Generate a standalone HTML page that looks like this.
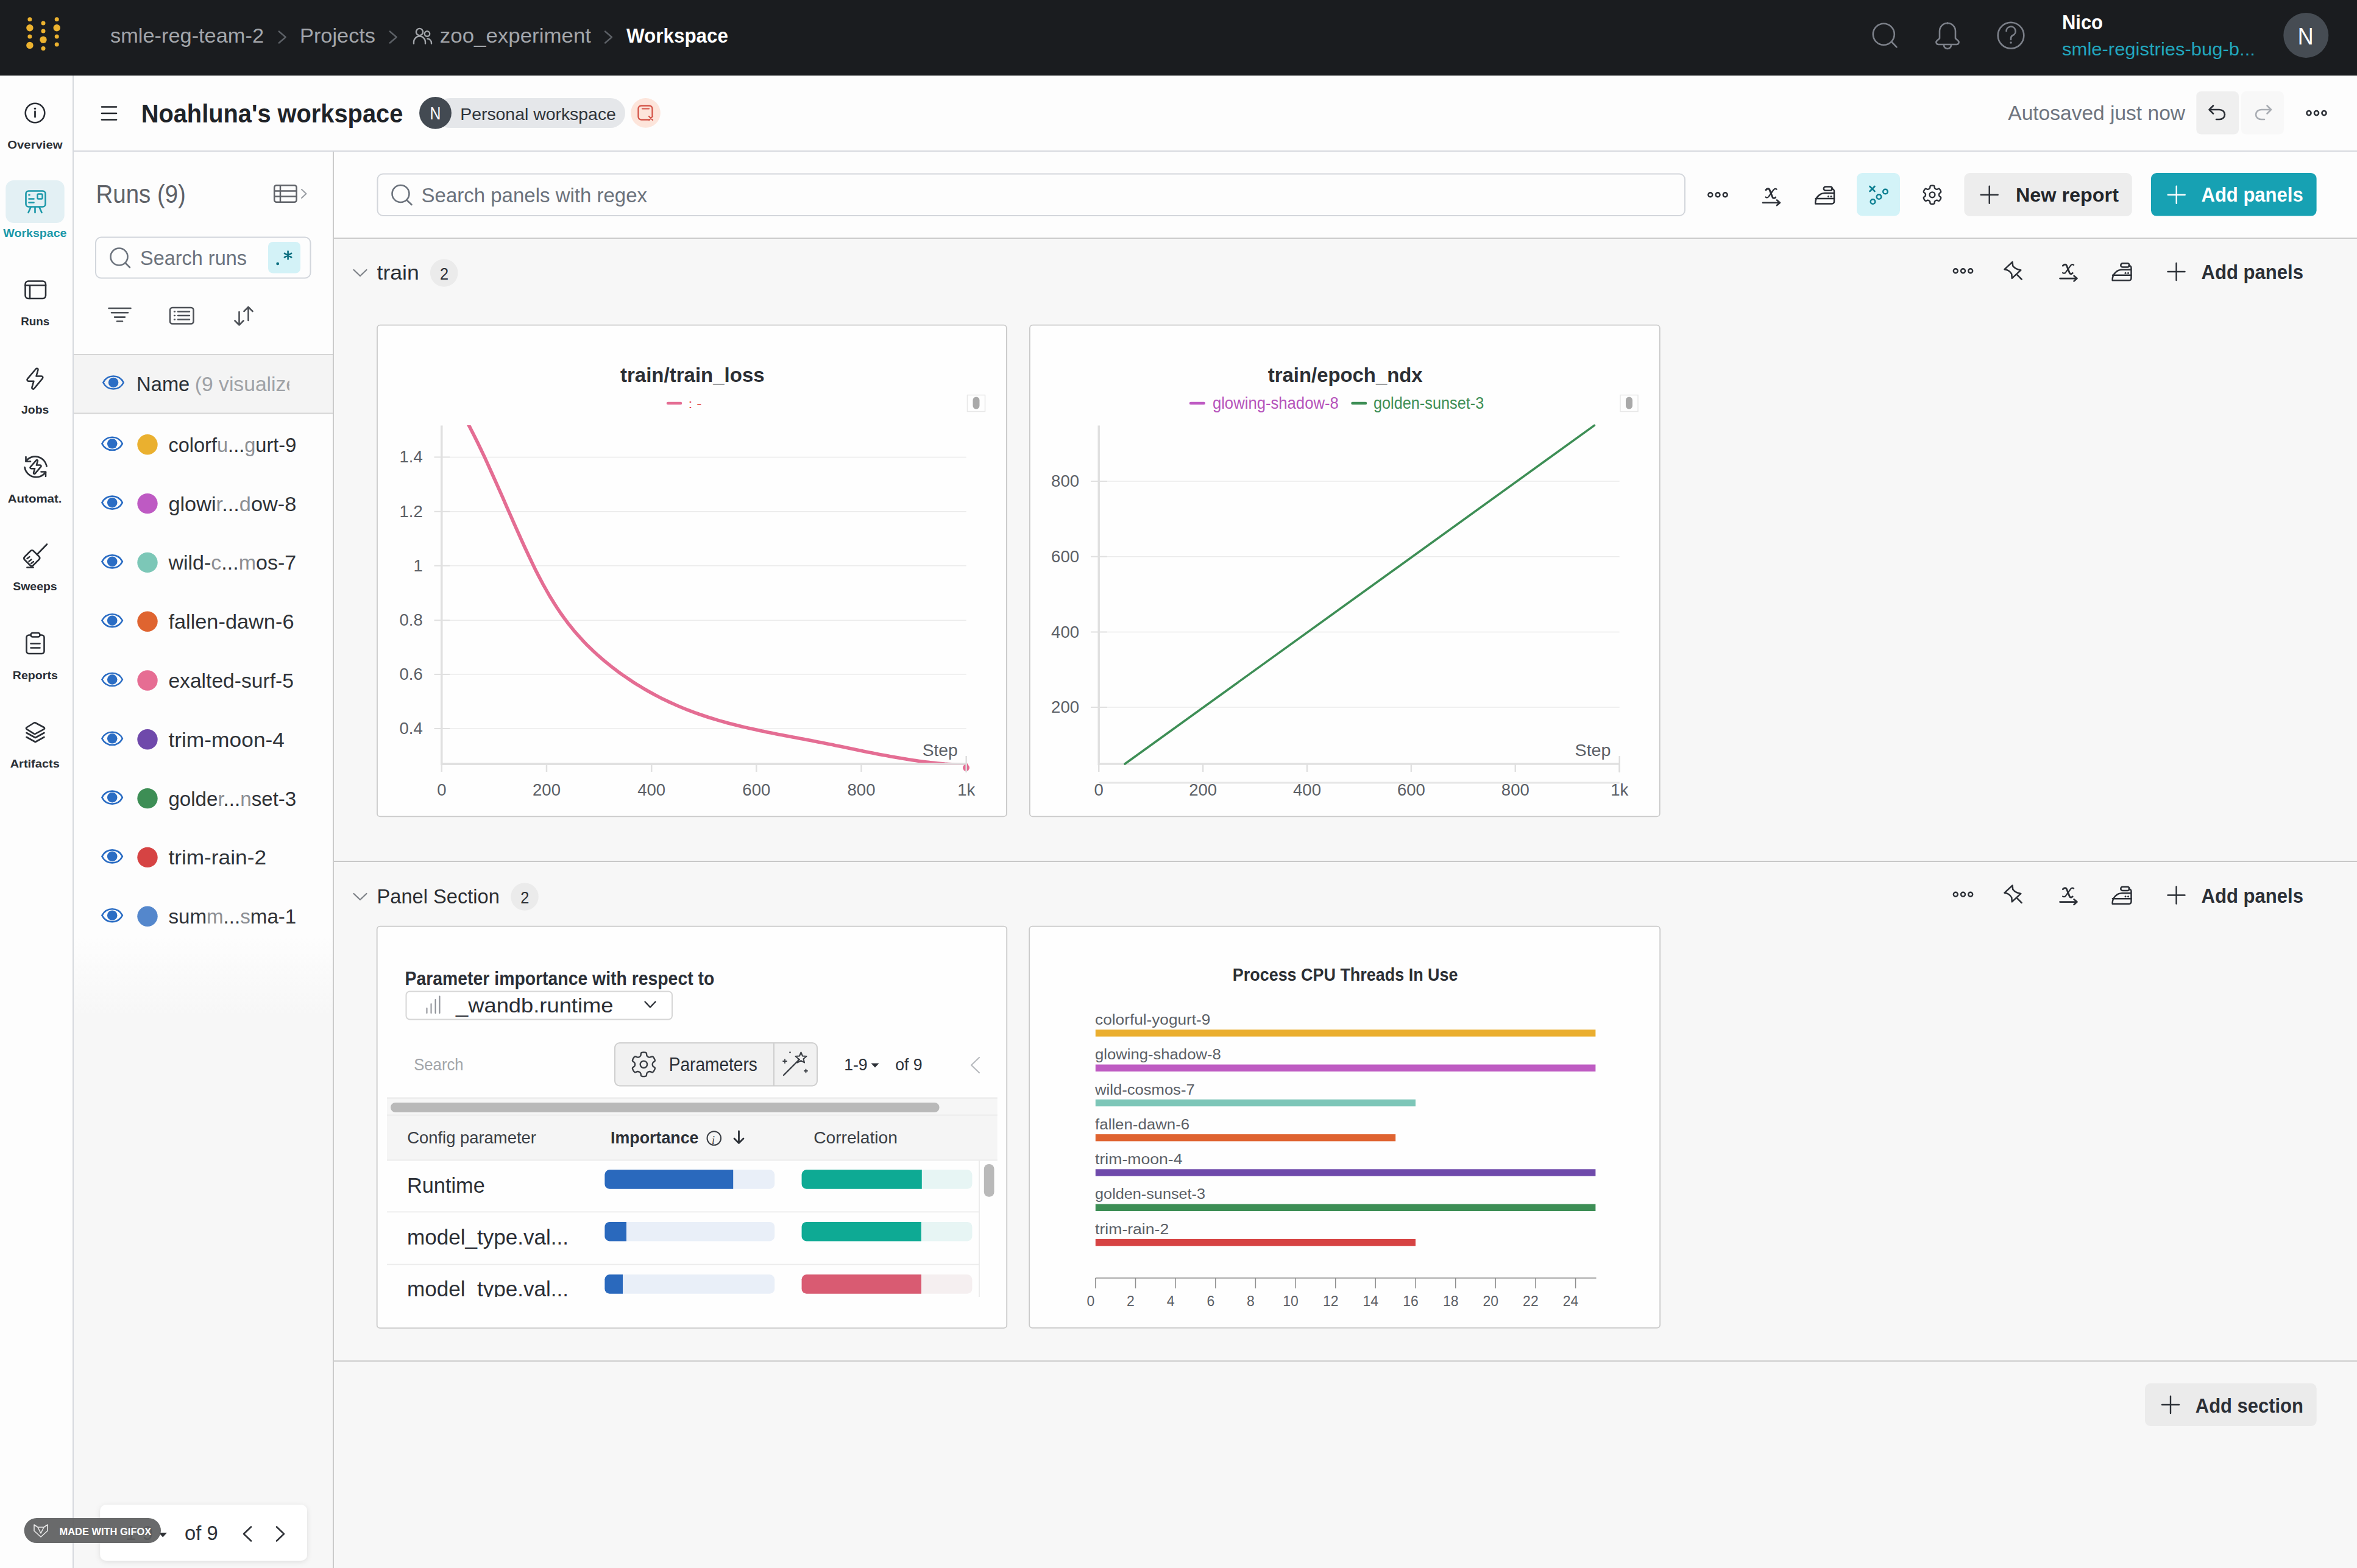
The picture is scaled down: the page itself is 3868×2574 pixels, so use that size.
<!DOCTYPE html>
<html><head><meta charset="utf-8"><title>W&amp;B Workspace</title>
<style>html,body{margin:0;padding:0;width:3868px;height:2574px;overflow:hidden;background:#f7f7f7}
svg{display:block;font-family:"Liberation Sans", sans-serif}</style></head><body>
<svg width="3868" height="2574" viewBox="0 0 3868 2574">
<rect x="0.0" y="0.0" width="3868.0" height="2574.0" rx="0" fill="#f7f7f7"/>
<rect x="0.0" y="0.0" width="3868.0" height="124.0" rx="0" fill="#1a1c1f"/>
<rect x="0.0" y="124.0" width="120.0" height="2450.0" rx="0" fill="#fdfdfd"/>
<rect x="119.0" y="124.0" width="2.0" height="2450.0" rx="0" fill="#d6d9de"/>
<rect x="121.0" y="124.0" width="3747.0" height="124.0" rx="0" fill="#fdfdfd"/>
<rect x="121.0" y="247.0" width="3747.0" height="2.0" rx="0" fill="#d6d9de"/>
<defs><linearGradient id="rg" x1="0" y1="0" x2="0" y2="1"><stop offset="0" stop-color="#fdfdfd"/><stop offset="0.555" stop-color="#fdfdfd"/><stop offset="0.61" stop-color="#f7f7f7"/><stop offset="1" stop-color="#f7f7f7"/></linearGradient></defs>
<rect x="121.0" y="249.0" width="425.0" height="2325.0" rx="0" fill="url(#rg)"/>
<rect x="546.0" y="249.0" width="2.0" height="2325.0" rx="0" fill="#cbcbcb"/>
<rect x="548.0" y="249.0" width="3320.0" height="141.0" rx="0" fill="#fdfdfd"/>
<rect x="548.0" y="390.0" width="3320.0" height="2.0" rx="0" fill="#cbcbcb"/>
<circle cx="48.9" cy="31.7" r="3.5" fill="#ecb22f"/>
<circle cx="48.9" cy="45.8" r="5.7" fill="#ecb22f"/>
<circle cx="48.9" cy="60.0" r="3.5" fill="#ecb22f"/>
<circle cx="48.9" cy="74.4" r="5.7" fill="#ecb22f"/>
<circle cx="71.0" cy="38.0" r="3.5" fill="#ecb22f"/>
<circle cx="71.0" cy="50.9" r="3.5" fill="#ecb22f"/>
<circle cx="71.0" cy="65.3" r="5.7" fill="#ecb22f"/>
<circle cx="71.0" cy="79.6" r="3.5" fill="#ecb22f"/>
<circle cx="93.2" cy="31.7" r="3.5" fill="#ecb22f"/>
<circle cx="93.2" cy="45.8" r="5.7" fill="#ecb22f"/>
<circle cx="93.2" cy="60.0" r="3.5" fill="#ecb22f"/>
<circle cx="93.2" cy="72.9" r="3.5" fill="#ecb22f"/>
<text x="181.0" y="70.2" font-size="33.0" fill="#a3a6ab" textLength="252.0" lengthAdjust="spacingAndGlyphs" text-anchor="start">smle-reg-team-2</text>
<path d="M457.7,51.5 L468.7,61 L457.7,70.5" fill="none" stroke="#5d6167" stroke-width="2.4" stroke-linecap="round" stroke-linejoin="round"/>
<path d="M639.7,51.5 L650.7,61 L639.7,70.5" fill="none" stroke="#5d6167" stroke-width="2.4" stroke-linecap="round" stroke-linejoin="round"/>
<path d="M993,51.5 L1004,61 L993,70.5" fill="none" stroke="#5d6167" stroke-width="2.4" stroke-linecap="round" stroke-linejoin="round"/>
<text x="492.0" y="70.2" font-size="33.0" fill="#a3a6ab" textLength="124.0" lengthAdjust="spacingAndGlyphs" text-anchor="start">Projects</text>
<path d="M679,71.5 v-2.5 a9.5,9.5 0 0 1 19,0 v2.5" fill="none" stroke="#a3a6ab" stroke-width="2.4" stroke-linecap="round" stroke-linejoin="round"/>
<circle cx="688.5" cy="52.5" r="5.6" fill="none" stroke="#a3a6ab" stroke-width="2.4"/>
<circle cx="701.0" cy="55.5" r="4.2" fill="none" stroke="#a3a6ab" stroke-width="2.4"/>
<path d="M701.5,63.5 a7,7 0 0 1 6.5,7 v1" fill="none" stroke="#a3a6ab" stroke-width="2.4" stroke-linecap="round" stroke-linejoin="round"/>
<text x="721.8" y="70.2" font-size="33.0" fill="#a3a6ab" textLength="248.2" lengthAdjust="spacingAndGlyphs" text-anchor="start">zoo_experiment</text>
<text x="1028.0" y="70.2" font-size="33.0" font-weight="700" fill="#ffffff" textLength="167.0" lengthAdjust="spacingAndGlyphs" text-anchor="start">Workspace</text>
<circle cx="3091.3" cy="56.3" r="17.5" fill="none" stroke="#7c8089" stroke-width="2.6"/>
<path d="M3104.5,69 L3112.5,77.3" fill="none" stroke="#7c8089" stroke-width="2.6" stroke-linecap="round" stroke-linejoin="round"/>
<path d="M3183,63 v-12 a13,13 0 0 1 26,0 v12 l4.5,4 a3.5,3.5 0 0 1 -2.5,6 h-30 a3.5,3.5 0 0 1 -2.5,-6 z" fill="none" stroke="#7c8089" stroke-width="2.6" stroke-linecap="round" stroke-linejoin="round"/>
<path d="M3190,74 a6,6 0 0 0 12,0" fill="none" stroke="#7c8089" stroke-width="2.6" stroke-linecap="round" stroke-linejoin="round"/>
<path d="M3196,38.5 v-1" fill="none" stroke="#7c8089" stroke-width="2.6" stroke-linecap="round" stroke-linejoin="round"/>
<circle cx="3300.0" cy="58.2" r="21.3" fill="none" stroke="#7c8089" stroke-width="2.6"/>
<path d="M3292.5,51 a7.5,7.5 0 1 1 10.5,7 c-2.5,1.2 -3,2.8 -3,5.5 v1.5" fill="none" stroke="#7c8089" stroke-width="2.6" stroke-linecap="round" stroke-linejoin="round"/>
<circle cx="3300.0" cy="70.0" r="1.8" fill="#7c8089"/>
<text x="3384.0" y="47.8" font-size="33.0" font-weight="700" fill="#ffffff" textLength="67.0" lengthAdjust="spacingAndGlyphs" text-anchor="start">Nico</text>
<text x="3384.1" y="90.5" font-size="30.0" fill="#22a7be" textLength="316.8" lengthAdjust="spacingAndGlyphs" text-anchor="start">smle-registries-bug-b...</text>
<circle cx="3784.3" cy="57.9" r="37.0" fill="#464c53"/>
<text x="3770.8" y="72.7" font-size="39.5" fill="#ffffff" textLength="25.9" lengthAdjust="spacingAndGlyphs" text-anchor="start">N</text>
<path d="M167,175.5 H191" fill="none" stroke="#1f2328" stroke-width="2.6" stroke-linecap="round" stroke-linejoin="round"/>
<path d="M167,186 H191" fill="none" stroke="#1f2328" stroke-width="2.6" stroke-linecap="round" stroke-linejoin="round"/>
<path d="M167,196.5 H191" fill="none" stroke="#1f2328" stroke-width="2.6" stroke-linecap="round" stroke-linejoin="round"/>
<text x="231.7" y="201.0" font-size="43.0" font-weight="700" fill="#1f2328" textLength="429.6" lengthAdjust="spacingAndGlyphs" text-anchor="start">Noahluna's workspace</text>
<rect x="714.0" y="161.0" width="312.0" height="49.0" rx="24.5" fill="#e5e7ea"/>
<circle cx="714.5" cy="185.4" r="26.4" fill="#434a52"/>
<text x="705.4" y="196.0" font-size="28.6" fill="#ffffff" textLength="17.9" lengthAdjust="spacingAndGlyphs" text-anchor="start">N</text>
<text x="755.2" y="196.6" font-size="28.0" fill="#2f343b" textLength="255.7" lengthAdjust="spacingAndGlyphs" text-anchor="start">Personal workspace</text>
<circle cx="1059.5" cy="185.4" r="24.3" fill="#fde5db"/>
<path d="M1066,196.5 h-13.5 a5,5 0 0 1 -5,-5 v-13 a5,5 0 0 1 5,-5 h13 a5,5 0 0 1 5,5 v11" fill="none" stroke="#d4574b" stroke-width="2.4" stroke-linecap="round" stroke-linejoin="round"/>
<path d="M1054,178.5 h11" fill="none" stroke="#d4574b" stroke-width="2.2" stroke-linecap="round" stroke-linejoin="round"/>
<path d="M1065,191 l6,6 M1071,191 l-6,6" fill="none" stroke="#d4574b" stroke-width="2.2" stroke-linecap="round" stroke-linejoin="round"/>
<text x="3295.3" y="197.0" font-size="34.0" fill="#6f7580" textLength="290.7" lengthAdjust="spacingAndGlyphs" text-anchor="start">Autosaved just now</text>
<rect x="3604.3" y="150.0" width="69.7" height="70.5" rx="8" fill="#efefef"/>
<path d="M3632,173.5 l-6.5,6.5 l6.5,6.5 M3626,180 h16 a9,8 0 0 1 0,16 h-5" fill="none" stroke="#2b2f36" stroke-width="2.6" stroke-linecap="round" stroke-linejoin="round"/>
<rect x="3678.0" y="150.0" width="70.0" height="70.5" rx="8" fill="#f8f8f8"/>
<path d="M3720.5,173.5 l6.5,6.5 l-6.5,6.5 M3727,180 h-16 a9,8 0 0 0 0,16 h5" fill="none" stroke="#a9adb3" stroke-width="2.6" stroke-linecap="round" stroke-linejoin="round"/>
<circle cx="3789.0" cy="185.6" r="3.6" fill="none" stroke="#2b2f36" stroke-width="2.5"/>
<circle cx="3801.5" cy="185.6" r="3.6" fill="none" stroke="#2b2f36" stroke-width="2.5"/>
<circle cx="3814.0" cy="185.6" r="3.6" fill="none" stroke="#2b2f36" stroke-width="2.5"/>
<circle cx="57.5" cy="185.5" r="15.8" fill="none" stroke="#2b2f36" stroke-width="2.6"/>
<path d="M57.5,183 v9" fill="none" stroke="#2b2f36" stroke-width="2.8" stroke-linecap="round" stroke-linejoin="round"/>
<circle cx="57.5" cy="178.2" r="1.7" fill="#2b2f36"/>
<text x="12.3" y="243.6" font-size="19.0" font-weight="700" fill="#2b2f36" textLength="90.2" lengthAdjust="spacingAndGlyphs" text-anchor="start">Overview</text>
<rect x="9.3" y="296.0" width="96.4" height="70.0" rx="13" fill="#e3f0f4"/>
<path d="M47,313.5 h23 a4.5,4.5 0 0 1 4.5,4.5 v17 a4.5,4.5 0 0 1 -4.5,4.5 h-23 a4.5,4.5 0 0 1 -4.5,-4.5 v-17 a4.5,4.5 0 0 1 4.5,-4.5 z" fill="none" stroke="#1b98a9" stroke-width="2.6" stroke-linecap="round" stroke-linejoin="round"/>
<path d="M47.5,320 h1 M47.5,326.5 h8 M47.5,332.5 h8" fill="none" stroke="#1b98a9" stroke-width="2.6" stroke-linecap="round" stroke-linejoin="round"/>
<rect x="61.5" y="318.5" width="8.0" height="8.0" rx="1.5" fill="none" stroke="#1b98a9" stroke-width="2.4"/>
<path d="M50.5,340 l-4,9 M57.5,340 v9 M64.5,340 l4,9" fill="none" stroke="#1b98a9" stroke-width="2.6" stroke-linecap="round" stroke-linejoin="round"/>
<text x="5.3" y="389.0" font-size="19.0" font-weight="700" fill="#1b98a9" textLength="104.2" lengthAdjust="spacingAndGlyphs" text-anchor="start">Workspace</text>
<rect x="41.5" y="461.5" width="33.5" height="28.5" rx="5" fill="none" stroke="#2b2f36" stroke-width="2.6"/>
<path d="M41.5,468.5 H75 M49,468.5 V490" fill="none" stroke="#2b2f36" stroke-width="2.6" stroke-linecap="round" stroke-linejoin="round"/>
<text x="34.2" y="533.7" font-size="19.0" font-weight="700" fill="#2b2f36" textLength="47.0" lengthAdjust="spacingAndGlyphs" text-anchor="start">Runs</text>
<path d="M59,605.5 c1.5,-1.5 3.8,-0.5 3.5,1.5 l-3,10.5 h8.5 c2,0 3,2.3 1.8,3.8 l-13.8,16.5 c-1.5,1.6 -4,0.4 -3.6,-1.6 l3,-10.5 h-8.6 c-2,0 -3,-2.4 -1.7,-3.9 z" fill="none" stroke="#2b2f36" stroke-width="2.6" stroke-linecap="round" stroke-linejoin="round"/>
<text x="35.1" y="678.6" font-size="19.0" font-weight="700" fill="#2b2f36" textLength="45.2" lengthAdjust="spacingAndGlyphs" text-anchor="start">Jobs</text>
<path d="M42.5,757 a19,19 0 0 1 34,8.5 M75,775 a19,19 0 0 1 -34.5,-8" fill="none" stroke="#2b2f36" stroke-width="2.6" stroke-linecap="round" stroke-linejoin="round"/>
<path d="M42.5,750 v7.5 h7.5 M75,782 v-7.5 h-7.5" fill="none" stroke="#2b2f36" stroke-width="2.6" stroke-linecap="round" stroke-linejoin="round"/>
<path d="M59.5,755.5 c1,-1 2.6,-0.4 2.4,1 l-2,7 h6 c1.4,0 2,1.6 1.2,2.6 l-9.5,11.2 c-1,1.1 -2.8,0.3 -2.5,-1.1 l2,-7 h-6 c-1.4,0 -2.1,-1.6 -1.2,-2.6 z" fill="none" stroke="#2b2f36" stroke-width="2.6" stroke-linecap="round" stroke-linejoin="round"/>
<text x="12.8" y="824.5" font-size="19.0" font-weight="700" fill="#2b2f36" textLength="88.7" lengthAdjust="spacingAndGlyphs" text-anchor="start">Automat.</text>
<path d="M77,893.5 L61,910" fill="none" stroke="#2b2f36" stroke-width="2.6" stroke-linecap="round" stroke-linejoin="round"/>
<path d="M57.5,907 l6.5,6.5 c1.5,1.5 1.5,3.5 0,5 l-9.5,9.5 c-1.5,1.5 -3.5,1.5 -5,0 l-9,-9 c-1.5,-1.5 -1.5,-3.5 0,-5 l9.5,-9.5 c1.5,-1.5 3.5,-1.5 5,0 z" fill="none" stroke="#2b2f36" stroke-width="2.6" stroke-linecap="round" stroke-linejoin="round"/>
<path d="M44.5,917 l4,-3 M47.5,921.5 l4,-3 M51,925 l4,-3" fill="none" stroke="#2b2f36" stroke-width="2.4" stroke-linecap="round" stroke-linejoin="round"/>
<path d="M44.5,931.5 h10" fill="none" stroke="#2b2f36" stroke-width="2.6" stroke-linecap="round" stroke-linejoin="round"/>
<text x="21.2" y="969.0" font-size="19.0" font-weight="700" fill="#2b2f36" textLength="72.5" lengthAdjust="spacingAndGlyphs" text-anchor="start">Sweeps</text>
<path d="M50,1042.5 h-2.5 a4,4 0 0 0 -4,4 v22.5 a4,4 0 0 0 4,4 h21 a4,4 0 0 0 4,-4 v-22.5 a4,4 0 0 0 -4,-4 h-2.5" fill="none" stroke="#2b2f36" stroke-width="2.6" stroke-linecap="round" stroke-linejoin="round"/>
<rect x="50.5" y="1039.0" width="15.0" height="6.5" rx="3" fill="none" stroke="#2b2f36" stroke-width="2.6"/>
<path d="M50.5,1056.5 h15 M50.5,1063.5 h15" fill="none" stroke="#2b2f36" stroke-width="2.6" stroke-linecap="round" stroke-linejoin="round"/>
<text x="20.8" y="1114.5" font-size="19.0" font-weight="700" fill="#2b2f36" textLength="74.0" lengthAdjust="spacingAndGlyphs" text-anchor="start">Reports</text>
<path d="M58,1186.5 l14,7.5 c1.5,0.8 1.5,2.4 0,3.2 l-14,7.5 c-0.6,0.3 -1.4,0.3 -2,0 l-12,-7.5 c-1.5,-0.8 -1.5,-2.4 0,-3.2 l12,-7.5 c0.6,-0.3 1.4,-0.3 2,0 z" fill="none" stroke="#2b2f36" stroke-width="2.6" stroke-linecap="round" stroke-linejoin="round"/>
<path d="M43.5,1203 l14.5,8 l14.5,-8 M43.5,1210 l14.5,8 l14.5,-8" fill="none" stroke="#2b2f36" stroke-width="2.6" stroke-linecap="round" stroke-linejoin="round"/>
<text x="16.7" y="1259.6" font-size="19.0" font-weight="700" fill="#2b2f36" textLength="81.1" lengthAdjust="spacingAndGlyphs" text-anchor="start">Artifacts</text>
<text x="157.5" y="333.0" font-size="42.0" fill="#5f6268" textLength="147.4" lengthAdjust="spacingAndGlyphs" text-anchor="start">Runs (9)</text>
<rect x="450.2" y="304.2" width="36.4" height="27.6" rx="3.5" fill="none" stroke="#5f6268" stroke-width="2.5"/>
<path d="M450.5,313.5 H486.5 M450.5,322.5 H486.5 M460,304.5 V331.5" fill="none" stroke="#5f6268" stroke-width="2.5" stroke-linecap="round" stroke-linejoin="round"/>
<path d="M495,311 l7.5,7 l-7.5,7" fill="none" stroke="#9a9ea4" stroke-width="2" stroke-linecap="round" stroke-linejoin="round"/>
<rect x="157.0" y="389.5" width="352.5" height="67.0" rx="9" fill="#fdfdfd" stroke="#d2d6dc" stroke-width="2"/>
<circle cx="195.5" cy="421.5" r="14.0" fill="none" stroke="#6c737d" stroke-width="2.6"/>
<path d="M205.5,431.5 L213,439" fill="none" stroke="#6c737d" stroke-width="2.6" stroke-linecap="round" stroke-linejoin="round"/>
<text x="230.0" y="435.0" font-size="33.0" fill="#6c737d" textLength="175.0" lengthAdjust="spacingAndGlyphs" text-anchor="start">Search runs</text>
<rect x="440.0" y="397.0" width="53.0" height="51.5" rx="8" fill="#d3f2f7"/>
<circle cx="455.7" cy="432.9" r="2.4" fill="#0b6f80"/>
<path d="M472.6,412.5 v13 M466.9,415.8 l11.3,6.5 M478.2,415.8 l-11.3,6.5" fill="none" stroke="#0b6f80" stroke-width="2.6" stroke-linecap="round" stroke-linejoin="round"/>
<path d="M178.5,506 h36 M183,513.3 h27 M188,520.6 h17 M192,527.5 h9" fill="none" stroke="#4d5157" stroke-width="2.6" stroke-linecap="round" stroke-linejoin="round"/>
<rect x="279.0" y="505.0" width="38.5" height="26.5" rx="4" fill="none" stroke="#4d5157" stroke-width="2.5"/>
<path d="M286,511.5 h1 M292,511.5 h19 M286,518 h1 M292,518 h19 M286,524.5 h1 M292,524.5 h19" fill="none" stroke="#4d5157" stroke-width="2.4" stroke-linecap="round" stroke-linejoin="round"/>
<path d="M392.5,512 v21.5 M385.5,526.5 l7,7 l7,-7 M407.5,526 v-22 M400.5,511 l7,-7 l7,7" fill="none" stroke="#4d5157" stroke-width="2.6" stroke-linecap="round" stroke-linejoin="round"/>
<rect x="121.0" y="582.0" width="425.0" height="96.5" rx="0" fill="#f4f4f4"/>
<rect x="121.0" y="581.0" width="425.0" height="2.0" rx="0" fill="#d5d5d5"/>
<rect x="121.0" y="677.5" width="425.0" height="2.0" rx="0" fill="#d5d5d5"/>
<path d="M169.3,628 C176.3,614 195.8,614 202.8,628 C195.8,642 176.3,642 169.3,628 Z" fill="none" stroke="#2b6dc4" stroke-width="2.6" stroke-linecap="round" stroke-linejoin="round"/>
<circle cx="186.1" cy="628.0" r="8.3" fill="#2b6dc4"/>
<text x="224.1" y="642.3" font-size="33.0" fill="#2b2f36" textLength="87.2" lengthAdjust="spacingAndGlyphs" text-anchor="start">Name</text>
<clipPath id="nh"><rect x="300" y="590" width="175" height="80"/></clipPath>
<text x="319.8" y="642.3" font-size="33.0" fill="#9fa2a6" textLength="198.2" lengthAdjust="spacingAndGlyphs" text-anchor="start" clip-path="url(#nh)">(9 visualized)</text>
<path d="M167.4,728.3 C174.4,714.3 193.9,714.3 200.9,728.3 C193.9,742.3 174.4,742.3 167.4,728.3 Z" fill="none" stroke="#2b6dc4" stroke-width="2.6" stroke-linecap="round" stroke-linejoin="round"/>
<circle cx="184.2" cy="728.3" r="8.3" fill="#2b6dc4"/>
<circle cx="242.0" cy="729.8" r="16.7" fill="#eab02f"/>
<text x="276.4" y="741.8" font-size="33" textLength="209.9" lengthAdjust="spacingAndGlyphs"><tspan fill="#2f3237">colorf</tspan><tspan fill="#8c8f94">u</tspan><tspan fill="#2f3237">...</tspan><tspan fill="#8c8f94">g</tspan><tspan fill="#2f3237">urt-9</tspan></text>
<path d="M167.4,825.0999999999999 C174.4,811.0999999999999 193.9,811.0999999999999 200.9,825.0999999999999 C193.9,839.0999999999999 174.4,839.0999999999999 167.4,825.0999999999999 Z" fill="none" stroke="#2b6dc4" stroke-width="2.6" stroke-linecap="round" stroke-linejoin="round"/>
<circle cx="184.2" cy="825.1" r="8.3" fill="#2b6dc4"/>
<circle cx="242.0" cy="826.6" r="16.7" fill="#be5ac3"/>
<text x="276.4" y="838.6" font-size="33" textLength="209.9" lengthAdjust="spacingAndGlyphs"><tspan fill="#2f3237">glowi</tspan><tspan fill="#8c8f94">r</tspan><tspan fill="#2f3237">...</tspan><tspan fill="#8c8f94">d</tspan><tspan fill="#2f3237">ow-8</tspan></text>
<path d="M167.4,921.9 C174.4,907.9 193.9,907.9 200.9,921.9 C193.9,935.9 174.4,935.9 167.4,921.9 Z" fill="none" stroke="#2b6dc4" stroke-width="2.6" stroke-linecap="round" stroke-linejoin="round"/>
<circle cx="184.2" cy="921.9" r="8.3" fill="#2b6dc4"/>
<circle cx="242.0" cy="923.4" r="16.7" fill="#7cc7b7"/>
<text x="276.4" y="935.4" font-size="33" textLength="209.9" lengthAdjust="spacingAndGlyphs"><tspan fill="#2f3237">wild-</tspan><tspan fill="#8c8f94">c</tspan><tspan fill="#2f3237">...</tspan><tspan fill="#8c8f94">m</tspan><tspan fill="#2f3237">os-7</tspan></text>
<path d="M167.4,1018.6999999999999 C174.4,1004.6999999999999 193.9,1004.6999999999999 200.9,1018.6999999999999 C193.9,1032.6999999999998 174.4,1032.6999999999998 167.4,1018.6999999999999 Z" fill="none" stroke="#2b6dc4" stroke-width="2.6" stroke-linecap="round" stroke-linejoin="round"/>
<circle cx="184.2" cy="1018.7" r="8.3" fill="#2b6dc4"/>
<circle cx="242.0" cy="1020.2" r="16.7" fill="#df6430"/>
<text x="276.4" y="1032.2" font-size="33" textLength="206.1" lengthAdjust="spacingAndGlyphs"><tspan fill="#2f3237">fallen-dawn-6</tspan></text>
<path d="M167.4,1115.5 C174.4,1101.5 193.9,1101.5 200.9,1115.5 C193.9,1129.5 174.4,1129.5 167.4,1115.5 Z" fill="none" stroke="#2b6dc4" stroke-width="2.6" stroke-linecap="round" stroke-linejoin="round"/>
<circle cx="184.2" cy="1115.5" r="8.3" fill="#2b6dc4"/>
<circle cx="242.0" cy="1117.0" r="16.7" fill="#e66d93"/>
<text x="276.4" y="1129.0" font-size="33" textLength="205.6" lengthAdjust="spacingAndGlyphs"><tspan fill="#2f3237">exalted-surf-5</tspan></text>
<path d="M167.4,1212.3 C174.4,1198.3 193.9,1198.3 200.9,1212.3 C193.9,1226.3 174.4,1226.3 167.4,1212.3 Z" fill="none" stroke="#2b6dc4" stroke-width="2.6" stroke-linecap="round" stroke-linejoin="round"/>
<circle cx="184.2" cy="1212.3" r="8.3" fill="#2b6dc4"/>
<circle cx="242.0" cy="1213.8" r="16.7" fill="#6f49ab"/>
<text x="276.4" y="1225.8" font-size="33" textLength="190.6" lengthAdjust="spacingAndGlyphs"><tspan fill="#2f3237">trim-moon-4</tspan></text>
<path d="M167.4,1309.1 C174.4,1295.1 193.9,1295.1 200.9,1309.1 C193.9,1323.1 174.4,1323.1 167.4,1309.1 Z" fill="none" stroke="#2b6dc4" stroke-width="2.6" stroke-linecap="round" stroke-linejoin="round"/>
<circle cx="184.2" cy="1309.1" r="8.3" fill="#2b6dc4"/>
<circle cx="242.0" cy="1310.6" r="16.7" fill="#3d8e55"/>
<text x="276.4" y="1322.6" font-size="33" textLength="209.9" lengthAdjust="spacingAndGlyphs"><tspan fill="#2f3237">golde</tspan><tspan fill="#8c8f94">r</tspan><tspan fill="#2f3237">...</tspan><tspan fill="#8c8f94">n</tspan><tspan fill="#2f3237">set-3</tspan></text>
<path d="M167.4,1405.9 C174.4,1391.9 193.9,1391.9 200.9,1405.9 C193.9,1419.9 174.4,1419.9 167.4,1405.9 Z" fill="none" stroke="#2b6dc4" stroke-width="2.6" stroke-linecap="round" stroke-linejoin="round"/>
<circle cx="184.2" cy="1405.9" r="8.3" fill="#2b6dc4"/>
<circle cx="242.0" cy="1407.4" r="16.7" fill="#d64343"/>
<text x="276.4" y="1419.4" font-size="33" textLength="160.6" lengthAdjust="spacingAndGlyphs"><tspan fill="#2f3237">trim-rain-2</tspan></text>
<path d="M167.4,1502.6999999999998 C174.4,1488.6999999999998 193.9,1488.6999999999998 200.9,1502.6999999999998 C193.9,1516.6999999999998 174.4,1516.6999999999998 167.4,1502.6999999999998 Z" fill="none" stroke="#2b6dc4" stroke-width="2.6" stroke-linecap="round" stroke-linejoin="round"/>
<circle cx="184.2" cy="1502.7" r="8.3" fill="#2b6dc4"/>
<circle cx="242.0" cy="1504.2" r="16.7" fill="#5487cc"/>
<text x="276.4" y="1516.2" font-size="33" textLength="209.9" lengthAdjust="spacingAndGlyphs"><tspan fill="#2f3237">sum</tspan><tspan fill="#8c8f94">m</tspan><tspan fill="#2f3237">...</tspan><tspan fill="#8c8f94">s</tspan><tspan fill="#2f3237">ma-1</tspan></text>
<filter id="sh" x="-20%" y="-40%" width="140%" height="180%"><feDropShadow dx="0" dy="2" stdDeviation="4" flood-color="#000" flood-opacity="0.10"/></filter>
<rect x="164.3" y="2470.0" width="339.7" height="92.0" rx="10" fill="#ffffff" filter="url(#sh)"/>
<text x="206.0" y="2528.0" font-size="33.0" fill="#2f3237" textLength="45.0" lengthAdjust="spacingAndGlyphs" text-anchor="start">1-9</text>
<path d="M260.5,2516 h13.5 l-6.75,7.5 z" fill="#2f3237"/>
<text x="303.0" y="2528.0" font-size="33.0" fill="#2f3237" textLength="54.6" lengthAdjust="spacingAndGlyphs" text-anchor="start">of 9</text>
<path d="M412,2506.5 l-12,11.5 l12,11.5" fill="none" stroke="#2f3237" stroke-width="2.6" stroke-linecap="round" stroke-linejoin="round"/>
<path d="M454,2506.5 l12,11.5 l-12,11.5" fill="none" stroke="#2f3237" stroke-width="2.6" stroke-linecap="round" stroke-linejoin="round"/>
<rect x="39.6" y="2492.0" width="224.4" height="41.0" rx="20.5" fill="#5e5f60" fill-opacity="0.93"/>
<path d="M56,2503 l6,4 h10 l6,-4 v10 l-11,10 l-11,-10 z M62,2507 l5,10 l5,-10" fill="none" stroke="#e8e8e8" stroke-width="1.6" stroke-linecap="round" stroke-linejoin="round"/>
<text x="97.5" y="2519.5" font-size="16.0" font-weight="700" fill="#ffffff" textLength="150.7" lengthAdjust="spacingAndGlyphs" text-anchor="start">MADE WITH GIFOX</text>
<rect x="619.5" y="285.5" width="2145.5" height="68.5" rx="9" fill="#fdfdfd" stroke="#d3d6db" stroke-width="2"/>
<circle cx="657.5" cy="318.0" r="14.0" fill="none" stroke="#6b727c" stroke-width="2.6"/>
<path d="M667.5,328.5 L675.5,336" fill="none" stroke="#6b727c" stroke-width="2.6" stroke-linecap="round" stroke-linejoin="round"/>
<text x="691.6" y="332.0" font-size="33.0" fill="#6b727c" textLength="370.4" lengthAdjust="spacingAndGlyphs" text-anchor="start">Search panels with regex</text>
<circle cx="2806.8" cy="319.7" r="3.5" fill="none" stroke="#2b2f36" stroke-width="2.4"/>
<circle cx="2819.0" cy="319.7" r="3.5" fill="none" stroke="#2b2f36" stroke-width="2.4"/>
<circle cx="2831.2" cy="319.7" r="3.5" fill="none" stroke="#2b2f36" stroke-width="2.4"/>
<path d="M2897.9,311.9 c1.8,-2.6 5,-3 6.2,0 l4.6,11.6 c0.9,2.2 3.2,2.6 5,0.6" fill="none" stroke="#2b2f36" stroke-width="2.9" stroke-linecap="round" stroke-linejoin="round"/>
<path d="M2915.6,310.7 c-1.6,-1.2 -3.6,-0.8 -5,0.8 l-8.2,11.4 c-1.4,1.8 -3.6,2 -4.8,0.6" fill="none" stroke="#2b2f36" stroke-width="2.2" stroke-linecap="round" stroke-linejoin="round"/>
<path d="M2893,332.8 H2921 M2916,328.5 l5,4.3 l-5,4.3" fill="none" stroke="#2b2f36" stroke-width="2.6" stroke-linecap="round" stroke-linejoin="round"/>
<rect x="2992.8" y="306.4" width="14.2" height="6.4" rx="3.2" fill="none" stroke="#2b2f36" stroke-width="2.5"/>
<path d="M3006,310.0 a4,4 0 0 1 4,4 v17 a3.5,3.5 0 0 1 -3.5,3.5 h-27.3 v-2.5 a16,16 0 0 1 15.5,-15 h15.3" fill="none" stroke="#2b2f36" stroke-width="2.5" stroke-linecap="round" stroke-linejoin="round"/>
<path d="M2979.5,325.9 H3010" fill="none" stroke="#2b2f36" stroke-width="2.5" stroke-linecap="round" stroke-linejoin="round"/>
<circle cx="3000.5" cy="322.5" r="1.5" fill="#2b2f36"/>
<circle cx="3005.0" cy="322.5" r="1.5" fill="#2b2f36"/>
<rect x="3047.0" y="284.0" width="71.0" height="70.5" rx="9" fill="#d3f3f8"/>
<path d="M3068.5,306 l8,8 M3076.5,306 l-8,8" fill="none" stroke="#0c7f91" stroke-width="2.6" stroke-linecap="round" stroke-linejoin="round"/>
<circle cx="3073.5" cy="331.0" r="3.8" fill="none" stroke="#0c7f91" stroke-width="2.5"/>
<circle cx="3083.5" cy="323.0" r="3.8" fill="none" stroke="#0c7f91" stroke-width="2.5"/>
<circle cx="3094.0" cy="314.5" r="3.8" fill="none" stroke="#0c7f91" stroke-width="2.5"/>
<path d="M3165.50,310.27 C3166.15,309.90 3166.77,309.37 3167.13,308.57 C3167.50,307.76 3167.30,306.08 3167.68,305.43 C3168.06,304.79 3168.59,304.81 3169.41,304.68 C3170.23,304.56 3171.77,304.56 3172.59,304.68 C3173.41,304.81 3173.94,304.79 3174.32,305.43 C3174.70,306.08 3174.50,307.76 3174.87,308.57 C3175.23,309.37 3175.85,309.90 3176.50,310.27 C3177.15,310.65 3177.91,310.92 3178.79,310.83 C3179.67,310.75 3181.03,309.74 3181.78,309.74 C3182.53,309.75 3182.78,310.22 3183.30,310.87 C3183.81,311.51 3184.59,312.85 3184.89,313.62 C3185.19,314.39 3185.47,314.84 3185.10,315.49 C3184.73,316.14 3183.18,316.81 3182.66,317.53 C3182.15,318.25 3182.00,319.04 3182.00,319.80 C3182.00,320.56 3182.15,321.35 3182.66,322.07 C3183.18,322.79 3184.73,323.46 3185.10,324.11 C3185.47,324.76 3185.19,325.21 3184.89,325.98 C3184.59,326.75 3183.81,328.09 3183.30,328.73 C3182.78,329.38 3182.53,329.85 3181.78,329.86 C3181.03,329.86 3179.67,328.85 3178.79,328.77 C3177.91,328.68 3177.15,328.95 3176.50,329.33 C3175.85,329.70 3175.23,330.23 3174.87,331.03 C3174.50,331.84 3174.70,333.52 3174.32,334.17 C3173.94,334.81 3173.41,334.79 3172.59,334.92 C3171.77,335.04 3170.23,335.04 3169.41,334.92 C3168.59,334.79 3168.06,334.81 3167.68,334.17 C3167.30,333.52 3167.50,331.84 3167.13,331.03 C3166.77,330.23 3166.15,329.70 3165.50,329.33 C3164.85,328.95 3164.09,328.68 3163.21,328.77 C3162.33,328.85 3160.97,329.86 3160.22,329.86 C3159.47,329.85 3159.22,329.38 3158.70,328.73 C3158.19,328.09 3157.41,326.75 3157.11,325.98 C3156.81,325.21 3156.53,324.76 3156.90,324.11 C3157.27,323.46 3158.82,322.79 3159.34,322.07 C3159.85,321.35 3160.00,320.56 3160.00,319.80 C3160.00,319.04 3159.85,318.25 3159.34,317.53 C3158.82,316.81 3157.27,316.14 3156.90,315.49 C3156.53,314.84 3156.81,314.39 3157.11,313.62 C3157.41,312.85 3158.19,311.51 3158.70,310.87 C3159.22,310.22 3159.47,309.75 3160.22,309.74 C3160.97,309.74 3162.33,310.75 3163.21,310.83 C3164.09,310.92 3164.85,310.65 3165.50,310.27 Z" fill="none" stroke="#2b2f36" stroke-width="2.4" stroke-linecap="round" stroke-linejoin="round"/>
<circle cx="3171.0" cy="319.8" r="4.4" fill="none" stroke="#2b2f36" stroke-width="2.4"/>
<rect x="3223.4" y="284.0" width="275.4" height="71.0" rx="9" fill="#ededed"/>
<path d="M3250.7,319.8 H3278.7 M3264.7,305.8 V333.8" fill="none" stroke="#2b2f36" stroke-width="2.4" stroke-linecap="round" stroke-linejoin="round"/>
<text x="3308.0" y="330.7" font-size="32.0" font-weight="700" fill="#23262b" textLength="168.9" lengthAdjust="spacingAndGlyphs" text-anchor="start">New report</text>
<rect x="3530.0" y="284.0" width="271.6" height="70.6" rx="9" fill="#17a1b3"/>
<path d="M3557.7,319.7 H3585.7 M3571.7,305.7 V333.7" fill="none" stroke="#ffffff" stroke-width="2.4" stroke-linecap="round" stroke-linejoin="round"/>
<text x="3612.5" y="330.6" font-size="33.0" font-weight="700" fill="#ffffff" textLength="167.2" lengthAdjust="spacingAndGlyphs" text-anchor="start">Add panels</text>
<path d="M580.5,443 l10.5,10 l10.5,-10" fill="none" stroke="#7d8187" stroke-width="2.2" stroke-linecap="round" stroke-linejoin="round"/>
<text x="618.5" y="459.0" font-size="33.0" fill="#2b2e33" textLength="69.2" lengthAdjust="spacingAndGlyphs" text-anchor="start">train</text>
<circle cx="728.7" cy="448.0" r="22.8" fill="#ebebeb"/>
<text x="721.9" y="459.0" font-size="27.0" fill="#2b2e33" textLength="14.1" lengthAdjust="spacingAndGlyphs" text-anchor="start">2</text>
<circle cx="3209.3" cy="444.8" r="3.5" fill="none" stroke="#2b2f36" stroke-width="2.4"/>
<circle cx="3221.5" cy="444.8" r="3.5" fill="none" stroke="#2b2f36" stroke-width="2.4"/>
<circle cx="3233.7" cy="444.8" r="3.5" fill="none" stroke="#2b2f36" stroke-width="2.4"/>
<path d="M3289.5,442.2 L3302.6,430.0 L3303.2,436.6 C3306,440.3 3310.5,442.8 3316.3,443.40000000000003 L3301.8,456.8 L3301.3,450.0 C3299,445.8 3295,442.6 3289.5,442.2 Z M3309.3,450.2 L3317.6,458.5" fill="none" stroke="#2b2f36" stroke-width="2.5" stroke-linecap="round" stroke-linejoin="round"/>
<path d="M3385.4,436.2 c1.8,-2.6 5,-3 6.2,0 l4.6,11.6 c0.9,2.2 3.2,2.6 5,0.6" fill="none" stroke="#2b2f36" stroke-width="2.9" stroke-linecap="round" stroke-linejoin="round"/>
<path d="M3403.1,435.0 c-1.6,-1.2 -3.6,-0.8 -5,0.8 l-8.2,11.4 c-1.4,1.8 -3.6,2 -4.8,0.6" fill="none" stroke="#2b2f36" stroke-width="2.2" stroke-linecap="round" stroke-linejoin="round"/>
<path d="M3380.5,457.1 H3408.5 M3403.5,452.8 l5,4.3 l-5,4.3" fill="none" stroke="#2b2f36" stroke-width="2.6" stroke-linecap="round" stroke-linejoin="round"/>
<rect x="3480.3" y="432.2" width="14.2" height="6.4" rx="3.2" fill="none" stroke="#2b2f36" stroke-width="2.5"/>
<path d="M3493.5,435.8 a4,4 0 0 1 4,4 v17 a3.5,3.5 0 0 1 -3.5,3.5 h-27.3 v-2.5 a16,16 0 0 1 15.5,-15 h15.3" fill="none" stroke="#2b2f36" stroke-width="2.5" stroke-linecap="round" stroke-linejoin="round"/>
<path d="M3467.0,451.7 H3497.5" fill="none" stroke="#2b2f36" stroke-width="2.5" stroke-linecap="round" stroke-linejoin="round"/>
<circle cx="3488.0" cy="448.3" r="1.5" fill="#2b2f36"/>
<circle cx="3492.5" cy="448.3" r="1.5" fill="#2b2f36"/>
<path d="M3557.5,446.0 H3585.5 M3571.5,432.0 V460.0" fill="none" stroke="#2b2f36" stroke-width="2.4" stroke-linecap="round" stroke-linejoin="round"/>
<text x="3612.5" y="457.5" font-size="33.0" font-weight="700" fill="#2b2f36" textLength="167.5" lengthAdjust="spacingAndGlyphs" text-anchor="start">Add panels</text>
<rect x="548.0" y="1413.0" width="3320.0" height="2.0" rx="0" fill="#c8c8c8"/>
<path d="M580.5,1467 l10.5,10 l10.5,-10" fill="none" stroke="#7d8187" stroke-width="2.2" stroke-linecap="round" stroke-linejoin="round"/>
<text x="618.5" y="1483.0" font-size="33.0" fill="#2b2e33" textLength="201.3" lengthAdjust="spacingAndGlyphs" text-anchor="start">Panel Section</text>
<circle cx="861.0" cy="1472.0" r="22.8" fill="#ebebeb"/>
<text x="854.2" y="1483.0" font-size="27.0" fill="#2b2e33" textLength="14.1" lengthAdjust="spacingAndGlyphs" text-anchor="start">2</text>
<circle cx="3209.3" cy="1468.3" r="3.5" fill="none" stroke="#2b2f36" stroke-width="2.4"/>
<circle cx="3221.5" cy="1468.3" r="3.5" fill="none" stroke="#2b2f36" stroke-width="2.4"/>
<circle cx="3233.7" cy="1468.3" r="3.5" fill="none" stroke="#2b2f36" stroke-width="2.4"/>
<path d="M3289.5,1465.7 L3302.6,1453.5 L3303.2,1460.1 C3306,1463.8 3310.5,1466.3 3316.3,1466.8999999999999 L3301.8,1480.3 L3301.3,1473.5 C3299,1469.3 3295,1466.1 3289.5,1465.7 Z M3309.3,1473.7 L3317.6,1482.0" fill="none" stroke="#2b2f36" stroke-width="2.5" stroke-linecap="round" stroke-linejoin="round"/>
<path d="M3385.4,1459.7 c1.8,-2.6 5,-3 6.2,0 l4.6,11.6 c0.9,2.2 3.2,2.6 5,0.6" fill="none" stroke="#2b2f36" stroke-width="2.9" stroke-linecap="round" stroke-linejoin="round"/>
<path d="M3403.1,1458.5 c-1.6,-1.2 -3.6,-0.8 -5,0.8 l-8.2,11.4 c-1.4,1.8 -3.6,2 -4.8,0.6" fill="none" stroke="#2b2f36" stroke-width="2.2" stroke-linecap="round" stroke-linejoin="round"/>
<path d="M3380.5,1480.6 H3408.5 M3403.5,1476.3 l5,4.3 l-5,4.3" fill="none" stroke="#2b2f36" stroke-width="2.6" stroke-linecap="round" stroke-linejoin="round"/>
<rect x="3480.3" y="1455.7" width="14.2" height="6.4" rx="3.2" fill="none" stroke="#2b2f36" stroke-width="2.5"/>
<path d="M3493.5,1459.3 a4,4 0 0 1 4,4 v17 a3.5,3.5 0 0 1 -3.5,3.5 h-27.3 v-2.5 a16,16 0 0 1 15.5,-15 h15.3" fill="none" stroke="#2b2f36" stroke-width="2.5" stroke-linecap="round" stroke-linejoin="round"/>
<path d="M3467.0,1475.2 H3497.5" fill="none" stroke="#2b2f36" stroke-width="2.5" stroke-linecap="round" stroke-linejoin="round"/>
<circle cx="3488.0" cy="1471.8" r="1.5" fill="#2b2f36"/>
<circle cx="3492.5" cy="1471.8" r="1.5" fill="#2b2f36"/>
<path d="M3557.5,1469.5 H3585.5 M3571.5,1455.5 V1483.5" fill="none" stroke="#2b2f36" stroke-width="2.4" stroke-linecap="round" stroke-linejoin="round"/>
<text x="3612.5" y="1481.5" font-size="33.0" font-weight="700" fill="#2b2f36" textLength="167.5" lengthAdjust="spacingAndGlyphs" text-anchor="start">Add panels</text>
<rect x="548.0" y="2233.3" width="3320.0" height="2.0" rx="0" fill="#c8c8c8"/>
<rect x="3520.0" y="2270.8" width="281.7" height="70.1" rx="9" fill="#ebebeb"/>
<path d="M3548,2306 H3576 M3562,2292 V2320" fill="none" stroke="#2b2f36" stroke-width="2.4" stroke-linecap="round" stroke-linejoin="round"/>
<text x="3602.8" y="2318.8" font-size="33.0" font-weight="700" fill="#2b2f36" textLength="177.1" lengthAdjust="spacingAndGlyphs" text-anchor="start">Add section</text>
<rect x="619.0" y="533.7" width="1032.9" height="806.7" rx="5" fill="#fefefe" stroke="#cacaca" stroke-width="1.8"/>
<text x="1018.0" y="627.0" font-size="33.0" font-weight="700" fill="#2c2f34" textLength="236.6" lengthAdjust="spacingAndGlyphs" text-anchor="start">train/train_loss</text>
<path d="M1096,662 H1117" fill="none" stroke="#e46d93" stroke-width="4.5" stroke-linecap="round" stroke-linejoin="round"/>
<text x="1129.4" y="670.0" font-size="20.0" fill="#e24848" textLength="22.2" lengthAdjust="spacingAndGlyphs" text-anchor="start">: -</text>
<rect x="1587.5" y="648.5" width="29.0" height="27.0" rx="0" fill="none" stroke="#e8e8e8" stroke-width="1.5"/>
<rect x="1596.5" y="651.5" width="11.0" height="20.0" rx="5.5" fill="#a9a9a9"/>
<line x1="738.0" y1="750.4" x2="1585.7" y2="750.4" stroke="#ebebeb" stroke-width="1.5"/>
<line x1="712.5" y1="750.4" x2="738.0" y2="750.4" stroke="#e0e0e0" stroke-width="2"/>
<text x="693.7" y="759.4" font-size="27.5" fill="#5b5f66" text-anchor="end">1.4</text>
<line x1="738.0" y1="839.8" x2="1585.7" y2="839.8" stroke="#ebebeb" stroke-width="1.5"/>
<line x1="712.5" y1="839.8" x2="738.0" y2="839.8" stroke="#e0e0e0" stroke-width="2"/>
<text x="693.7" y="848.8" font-size="27.5" fill="#5b5f66" text-anchor="end">1.2</text>
<line x1="738.0" y1="928.7" x2="1585.7" y2="928.7" stroke="#ebebeb" stroke-width="1.5"/>
<line x1="712.5" y1="928.7" x2="738.0" y2="928.7" stroke="#e0e0e0" stroke-width="2"/>
<text x="693.7" y="937.7" font-size="27.5" fill="#5b5f66" text-anchor="end">1</text>
<line x1="738.0" y1="1018.2" x2="1585.7" y2="1018.2" stroke="#ebebeb" stroke-width="1.5"/>
<line x1="712.5" y1="1018.2" x2="738.0" y2="1018.2" stroke="#e0e0e0" stroke-width="2"/>
<text x="693.7" y="1027.2" font-size="27.5" fill="#5b5f66" text-anchor="end">0.8</text>
<line x1="738.0" y1="1107.0" x2="1585.7" y2="1107.0" stroke="#ebebeb" stroke-width="1.5"/>
<line x1="712.5" y1="1107.0" x2="738.0" y2="1107.0" stroke="#e0e0e0" stroke-width="2"/>
<text x="693.7" y="1116.0" font-size="27.5" fill="#5b5f66" text-anchor="end">0.6</text>
<line x1="738.0" y1="1196.0" x2="1585.7" y2="1196.0" stroke="#ebebeb" stroke-width="1.5"/>
<line x1="712.5" y1="1196.0" x2="738.0" y2="1196.0" stroke="#e0e0e0" stroke-width="2"/>
<text x="693.7" y="1205.0" font-size="27.5" fill="#5b5f66" text-anchor="end">0.4</text>
<line x1="724.8" y1="698.4" x2="724.8" y2="1256.0" stroke="#e0e0e0" stroke-width="3.5"/>
<line x1="724.8" y1="1254.0" x2="1585.7" y2="1254.0" stroke="#e0e0e0" stroke-width="3.5"/>
<line x1="724.8" y1="1254.0" x2="724.8" y2="1267.0" stroke="#e0e0e0" stroke-width="2.5"/>
<text x="724.8" y="1306.4" font-size="27.5" fill="#5b5f66" text-anchor="middle">0</text>
<line x1="897.0" y1="1254.0" x2="897.0" y2="1267.0" stroke="#e0e0e0" stroke-width="2.5"/>
<text x="897.0" y="1306.4" font-size="27.5" fill="#5b5f66" text-anchor="middle">200</text>
<line x1="1069.2" y1="1254.0" x2="1069.2" y2="1267.0" stroke="#e0e0e0" stroke-width="2.5"/>
<text x="1069.2" y="1306.4" font-size="27.5" fill="#5b5f66" text-anchor="middle">400</text>
<line x1="1241.3" y1="1254.0" x2="1241.3" y2="1267.0" stroke="#e0e0e0" stroke-width="2.5"/>
<text x="1241.3" y="1306.4" font-size="27.5" fill="#5b5f66" text-anchor="middle">600</text>
<line x1="1413.5" y1="1254.0" x2="1413.5" y2="1267.0" stroke="#e0e0e0" stroke-width="2.5"/>
<text x="1413.5" y="1306.4" font-size="27.5" fill="#5b5f66" text-anchor="middle">800</text>
<line x1="1585.7" y1="1254.0" x2="1585.7" y2="1267.0" stroke="#e0e0e0" stroke-width="2.5"/>
<text x="1585.7" y="1306.4" font-size="27.5" fill="#5b5f66" text-anchor="middle">1k</text>
<text x="1513.7" y="1240.5" font-size="27.5" fill="#5b5f66" textLength="57.9" lengthAdjust="spacingAndGlyphs" text-anchor="start">Step</text>
<clipPath id="c1"><rect x="726" y="698" width="880" height="558"/></clipPath>
<path d="M760.0,681.2 L765.9,691.8 L771.9,702.9 L777.8,714.5 L783.8,726.5 L789.7,738.8 L795.7,751.4 L801.6,764.3 L807.5,777.5 L813.5,790.8 L819.4,804.2 L825.4,817.7 L831.3,831.3 L837.3,844.9 L843.2,858.3 L849.1,871.7 L855.1,885.0 L861.0,898.0 L867.0,910.8 L872.9,923.3 L878.8,935.4 L884.8,947.1 L890.7,958.3 L896.7,969.0 L902.6,979.3 L908.6,989.0 L914.5,998.2 L920.4,1007.0 L926.4,1015.3 L932.3,1023.2 L938.3,1030.7 L944.2,1037.9 L950.2,1044.7 L956.1,1051.2 L962.0,1057.4 L968.0,1063.3 L973.9,1069.0 L979.9,1074.5 L985.8,1079.7 L991.8,1084.8 L997.7,1089.7 L1003.6,1094.4 L1009.6,1099.0 L1015.5,1103.4 L1021.5,1107.7 L1027.4,1111.8 L1033.4,1115.9 L1039.3,1119.8 L1045.2,1123.6 L1051.2,1127.2 L1057.1,1130.8 L1063.1,1134.2 L1069.0,1137.5 L1074.9,1140.7 L1080.9,1143.9 L1086.8,1146.9 L1092.8,1149.8 L1098.7,1152.6 L1104.7,1155.3 L1110.6,1158.0 L1116.5,1160.5 L1122.5,1163.0 L1128.4,1165.3 L1134.4,1167.6 L1140.3,1169.8 L1146.3,1172.0 L1152.2,1174.0 L1158.1,1176.0 L1164.1,1178.0 L1170.0,1179.8 L1176.0,1181.6 L1181.9,1183.4 L1187.9,1185.0 L1193.8,1186.7 L1199.7,1188.3 L1205.7,1189.8 L1211.6,1191.3 L1217.6,1192.7 L1223.5,1194.1 L1229.5,1195.5 L1235.4,1196.8 L1241.3,1198.1 L1247.3,1199.4 L1253.2,1200.6 L1259.2,1201.9 L1265.1,1203.1 L1271.1,1204.2 L1277.0,1205.4 L1282.9,1206.5 L1288.9,1207.7 L1294.8,1208.8 L1300.8,1209.9 L1306.7,1211.1 L1312.6,1212.2 L1318.6,1213.3 L1324.5,1214.4 L1330.5,1215.6 L1336.4,1216.7 L1342.4,1217.9 L1348.3,1219.0 L1354.2,1220.2 L1360.2,1221.4 L1366.1,1222.6 L1372.1,1223.9 L1378.0,1225.1 L1384.0,1226.3 L1389.9,1227.6 L1395.8,1228.8 L1401.8,1230.0 L1407.7,1231.2 L1413.7,1232.5 L1419.6,1233.7 L1425.6,1234.9 L1431.5,1236.0 L1437.4,1237.2 L1443.4,1238.4 L1449.3,1239.5 L1455.3,1240.6 L1461.2,1241.7 L1467.2,1242.8 L1473.1,1243.8 L1479.0,1244.8 L1485.0,1245.8 L1490.9,1246.8 L1496.9,1247.7 L1502.8,1248.6 L1508.7,1249.4 L1514.7,1250.2 L1520.6,1251.0 L1526.6,1251.7 L1532.5,1252.4 L1538.5,1253.0 L1544.4,1253.5 L1550.3,1254.1 L1556.3,1254.5 L1562.2,1254.9 L1568.2,1255.3 L1574.1,1255.6 L1580.1,1255.8 L1586.0,1255.9" fill="none" stroke="#e46d93" stroke-width="5.6" stroke-linecap="round" stroke-linejoin="round" clip-path="url(#c1)"/>
<line x1="724.8" y1="1254.0" x2="1585.7" y2="1254.0" stroke="#e0e0e0" stroke-width="3.5"/>
<circle cx="1585.5" cy="1260.3" r="5.5" fill="#e46d93"/>
<line x1="1585.7" y1="1241.0" x2="1585.7" y2="1268.0" stroke="#dedede" stroke-width="2.5"/>
<rect x="1689.9" y="533.7" width="1033.9" height="806.7" rx="5" fill="#fefefe" stroke="#cacaca" stroke-width="1.8"/>
<text x="2080.8" y="627.0" font-size="33.0" font-weight="700" fill="#2c2f34" textLength="253.8" lengthAdjust="spacingAndGlyphs" text-anchor="start">train/epoch_ndx</text>
<path d="M1954,662 H1975.7" fill="none" stroke="#be5ac3" stroke-width="4.5" stroke-linecap="round" stroke-linejoin="round"/>
<text x="1989.9" y="671.0" font-size="27.5" fill="#b653bb" textLength="206.9" lengthAdjust="spacingAndGlyphs" text-anchor="start">glowing-shadow-8</text>
<path d="M2219.5,662 H2241" fill="none" stroke="#3d8e55" stroke-width="4.5" stroke-linecap="round" stroke-linejoin="round"/>
<text x="2254.0" y="671.0" font-size="27.5" fill="#3d8e55" textLength="181.2" lengthAdjust="spacingAndGlyphs" text-anchor="start">golden-sunset-3</text>
<rect x="2659.0" y="648.5" width="29.0" height="27.0" rx="0" fill="none" stroke="#e8e8e8" stroke-width="1.5"/>
<rect x="2668.0" y="651.5" width="11.0" height="20.0" rx="5.5" fill="#a9a9a9"/>
<line x1="1817.0" y1="790.0" x2="2657.7" y2="790.0" stroke="#ebebeb" stroke-width="1.5"/>
<line x1="1790.0" y1="790.0" x2="1817.0" y2="790.0" stroke="#e0e0e0" stroke-width="2"/>
<text x="1771.0" y="799.0" font-size="27.5" fill="#5b5f66" text-anchor="end">800</text>
<line x1="1817.0" y1="913.7" x2="2657.7" y2="913.7" stroke="#ebebeb" stroke-width="1.5"/>
<line x1="1790.0" y1="913.7" x2="1817.0" y2="913.7" stroke="#e0e0e0" stroke-width="2"/>
<text x="1771.0" y="922.7" font-size="27.5" fill="#5b5f66" text-anchor="end">600</text>
<line x1="1817.0" y1="1037.5" x2="2657.7" y2="1037.5" stroke="#ebebeb" stroke-width="1.5"/>
<line x1="1790.0" y1="1037.5" x2="1817.0" y2="1037.5" stroke="#e0e0e0" stroke-width="2"/>
<text x="1771.0" y="1046.5" font-size="27.5" fill="#5b5f66" text-anchor="end">400</text>
<line x1="1817.0" y1="1161.0" x2="2657.7" y2="1161.0" stroke="#ebebeb" stroke-width="1.5"/>
<line x1="1790.0" y1="1161.0" x2="1817.0" y2="1161.0" stroke="#e0e0e0" stroke-width="2"/>
<text x="1771.0" y="1170.0" font-size="27.5" fill="#5b5f66" text-anchor="end">200</text>
<line x1="1803.2" y1="698.4" x2="1803.2" y2="1256.0" stroke="#e0e0e0" stroke-width="3.5"/>
<line x1="1803.2" y1="1254.0" x2="2657.7" y2="1254.0" stroke="#e0e0e0" stroke-width="3.5"/>
<line x1="1803.2" y1="1285.0" x2="2657.7" y2="1285.0" stroke="#e6e6e6" stroke-width="3"/>
<line x1="1803.2" y1="1254.0" x2="1803.2" y2="1267.0" stroke="#e0e0e0" stroke-width="2.5"/>
<text x="1803.2" y="1306.4" font-size="27.5" fill="#5b5f66" text-anchor="middle">0</text>
<line x1="1974.1" y1="1254.0" x2="1974.1" y2="1267.0" stroke="#e0e0e0" stroke-width="2.5"/>
<text x="1974.1" y="1306.4" font-size="27.5" fill="#5b5f66" text-anchor="middle">200</text>
<line x1="2145.0" y1="1254.0" x2="2145.0" y2="1267.0" stroke="#e0e0e0" stroke-width="2.5"/>
<text x="2145.0" y="1306.4" font-size="27.5" fill="#5b5f66" text-anchor="middle">400</text>
<line x1="2315.9" y1="1254.0" x2="2315.9" y2="1267.0" stroke="#e0e0e0" stroke-width="2.5"/>
<text x="2315.9" y="1306.4" font-size="27.5" fill="#5b5f66" text-anchor="middle">600</text>
<line x1="2486.8" y1="1254.0" x2="2486.8" y2="1267.0" stroke="#e0e0e0" stroke-width="2.5"/>
<text x="2486.8" y="1306.4" font-size="27.5" fill="#5b5f66" text-anchor="middle">800</text>
<line x1="2657.7" y1="1254.0" x2="2657.7" y2="1267.0" stroke="#e0e0e0" stroke-width="2.5"/>
<text x="2657.7" y="1306.4" font-size="27.5" fill="#5b5f66" text-anchor="middle">1k</text>
<text x="2584.5" y="1240.5" font-size="27.5" fill="#5b5f66" textLength="59.0" lengthAdjust="spacingAndGlyphs" text-anchor="start">Step</text>
<path d="M1846,1254 L2616.4,698.4" fill="none" stroke="#3d8e55" stroke-width="3.6" stroke-linecap="round" stroke-linejoin="round"/>
<line x1="2657.7" y1="1241.0" x2="2657.7" y2="1268.0" stroke="#dedede" stroke-width="2.5"/>
<rect x="618.7" y="1520.7" width="1033.5" height="659.5" rx="5" fill="#fefefe" stroke="#cacaca" stroke-width="1.8"/>
<text x="664.6" y="1617.0" font-size="31.0" font-weight="700" fill="#2b2f36" textLength="507.7" lengthAdjust="spacingAndGlyphs" text-anchor="start">Parameter importance with respect to</text>
<rect x="666.5" y="1627.5" width="436.5" height="46.0" rx="6" fill="#ffffff" stroke="#d6d6d6" stroke-width="2"/>
<path d="M700.5,1655 v8 M707.5,1648 v15 M714.5,1641 v22 M721.5,1635.5 v27.5" fill="none" stroke="#8d9096" stroke-width="2" stroke-linecap="round" stroke-linejoin="round"/>
<text x="748.0" y="1662.4" font-size="34.0" fill="#2b2f36" textLength="258.5" lengthAdjust="spacingAndGlyphs" text-anchor="start">_wandb.runtime</text>
<path d="M1058.5,1644.5 l8.5,9 l8.5,-9" fill="none" stroke="#2b2f36" stroke-width="2.4" stroke-linecap="round" stroke-linejoin="round"/>
<text x="679.2" y="1756.6" font-size="28.0" fill="#a2a5a9" textLength="81.4" lengthAdjust="spacingAndGlyphs" text-anchor="start">Search</text>
<rect x="1009.0" y="1712.0" width="332.0" height="70.5" rx="8" fill="#f1f1f1" stroke="#cfcfcf" stroke-width="2"/>
<rect x="1269.0" y="1712.0" width="2.0" height="70.5" rx="0" fill="#cfcfcf"/>
<path d="M1049.25,1734.92 C1050.10,1734.42 1050.90,1733.75 1051.37,1732.70 C1051.84,1731.65 1051.59,1729.47 1052.09,1728.62 C1052.58,1727.78 1053.27,1727.81 1054.33,1727.65 C1055.40,1727.49 1057.40,1727.49 1058.47,1727.65 C1059.53,1727.81 1060.22,1727.78 1060.71,1728.62 C1061.21,1729.47 1060.96,1731.65 1061.43,1732.70 C1061.90,1733.75 1062.70,1734.42 1063.55,1734.92 C1064.40,1735.41 1065.39,1735.76 1066.53,1735.64 C1067.68,1735.53 1069.44,1734.22 1070.42,1734.23 C1071.39,1734.23 1071.71,1734.85 1072.39,1735.69 C1073.06,1736.52 1074.06,1738.26 1074.45,1739.26 C1074.84,1740.26 1075.21,1740.85 1074.73,1741.70 C1074.25,1742.54 1072.23,1743.42 1071.56,1744.35 C1070.89,1745.29 1070.70,1746.32 1070.70,1747.30 C1070.70,1748.28 1070.89,1749.31 1071.56,1750.25 C1072.23,1751.18 1074.25,1752.06 1074.73,1752.90 C1075.21,1753.75 1074.84,1754.34 1074.45,1755.34 C1074.06,1756.34 1073.06,1758.08 1072.39,1758.91 C1071.71,1759.75 1071.39,1760.37 1070.42,1760.37 C1069.44,1760.38 1067.68,1759.07 1066.53,1758.96 C1065.39,1758.84 1064.40,1759.19 1063.55,1759.68 C1062.70,1760.18 1061.90,1760.85 1061.43,1761.90 C1060.96,1762.95 1061.21,1765.13 1060.71,1765.98 C1060.22,1766.82 1059.53,1766.79 1058.47,1766.95 C1057.40,1767.11 1055.40,1767.11 1054.33,1766.95 C1053.27,1766.79 1052.58,1766.82 1052.09,1765.98 C1051.59,1765.13 1051.84,1762.95 1051.37,1761.90 C1050.90,1760.85 1050.10,1760.18 1049.25,1759.68 C1048.40,1759.19 1047.41,1758.84 1046.27,1758.96 C1045.12,1759.07 1043.36,1760.38 1042.38,1760.37 C1041.41,1760.37 1041.09,1759.75 1040.41,1758.91 C1039.74,1758.08 1038.74,1756.34 1038.35,1755.34 C1037.96,1754.34 1037.59,1753.75 1038.07,1752.90 C1038.55,1752.06 1040.57,1751.18 1041.24,1750.25 C1041.91,1749.31 1042.10,1748.28 1042.10,1747.30 C1042.10,1746.32 1041.91,1745.29 1041.24,1744.35 C1040.57,1743.42 1038.55,1742.54 1038.07,1741.70 C1037.59,1740.85 1037.96,1740.26 1038.35,1739.26 C1038.74,1738.26 1039.74,1736.52 1040.41,1735.69 C1041.09,1734.85 1041.41,1734.23 1042.38,1734.23 C1043.36,1734.22 1045.12,1735.53 1046.27,1735.64 C1047.41,1735.76 1048.40,1735.41 1049.25,1734.92 Z" fill="none" stroke="#3a3e44" stroke-width="2.4" stroke-linecap="round" stroke-linejoin="round"/>
<circle cx="1056.4" cy="1747.3" r="5.7" fill="none" stroke="#3a3e44" stroke-width="2.4"/>
<text x="1097.7" y="1757.6" font-size="31.0" fill="#2b2f36" textLength="145.2" lengthAdjust="spacingAndGlyphs" text-anchor="start">Parameters</text>
<path d="M1286,1765 l26,-26" fill="none" stroke="#3a3e44" stroke-width="2.4" stroke-linecap="round" stroke-linejoin="round"/>
<path d="M1314.5,1727.5 l2.5,6 l6.5,0.5 l-5,4.2 l1.6,6.3 l-5.6,-3.5 l-5.6,3.5 l1.6,-6.3 l-5,-4.2 l6.5,-0.5 z" fill="none" stroke="#3a3e44" stroke-width="2" stroke-linecap="round" stroke-linejoin="round"/>
<path d="M1285,1742 h6 M1288,1739 v6 M1320,1758 h5 M1322.5,1755.5 v5" fill="none" stroke="#3a3e44" stroke-width="1.8" stroke-linecap="round" stroke-linejoin="round"/>
<circle cx="1296.5" cy="1727.5" r="1.3" fill="#3a3e44"/>
<text x="1385.2" y="1756.6" font-size="28.0" fill="#2b2f36" textLength="38.5" lengthAdjust="spacingAndGlyphs" text-anchor="start">1-9</text>
<path d="M1429.5,1745.5 h13 l-6.5,7 z" fill="#2b2f36"/>
<text x="1469.2" y="1756.6" font-size="28.0" fill="#2b2f36" textLength="44.5" lengthAdjust="spacingAndGlyphs" text-anchor="start">of 9</text>
<path d="M1607,1736 l-13,12.5 l13,12.5" fill="none" stroke="#b8bbbf" stroke-width="2.2" stroke-linecap="round" stroke-linejoin="round"/>
<rect x="635.0" y="1802.5" width="1001.7" height="28.5" rx="0" fill="#f6f6f6"/>
<rect x="635.0" y="1801.5" width="1001.7" height="2.0" rx="0" fill="#e8e8e8"/>
<rect x="641.0" y="1810.0" width="900.6" height="16.0" rx="8" fill="#b9b9b9"/>
<rect x="635.0" y="1831.0" width="1001.7" height="73.6" rx="0" fill="#f5f5f5"/>
<rect x="635.0" y="1829.5" width="1001.7" height="2.0" rx="0" fill="#ececec"/>
<rect x="635.0" y="1903.5" width="1001.7" height="2.0" rx="0" fill="#ececec"/>
<text x="668.2" y="1876.9" font-size="28.0" fill="#3a3e44" textLength="211.7" lengthAdjust="spacingAndGlyphs" text-anchor="start">Config parameter</text>
<text x="1002.1" y="1876.9" font-size="28.0" font-weight="700" fill="#2b2f36" textLength="144.4" lengthAdjust="spacingAndGlyphs" text-anchor="start">Importance</text>
<circle cx="1171.8" cy="1868.5" r="11.3" fill="none" stroke="#3a3e44" stroke-width="2"/>
<text x="1168" y="1877.5" font-size="18" font-family="Liberation Serif" font-style="italic" fill="#3a3e44">i</text>
<path d="M1212.5,1857 v19 M1205,1869 l7.5,7.5 l7.5,-7.5" fill="none" stroke="#2b2f36" stroke-width="2.8" stroke-linecap="round" stroke-linejoin="round"/>
<text x="1335.2" y="1876.9" font-size="28.0" fill="#3a3e44" textLength="137.7" lengthAdjust="spacingAndGlyphs" text-anchor="start">Correlation</text>
<clipPath id="tb"><rect x="635" y="1905" width="1002" height="225"/></clipPath>
<g clip-path="url(#tb)">
<text x="668.0" y="1958.0" font-size="35.0" fill="#2b2f36" textLength="127.8" lengthAdjust="spacingAndGlyphs" text-anchor="start">Runtime</text>
<rect x="992.4" y="1920.3" width="278.8" height="31.4" rx="8" fill="#e9eff8"/>
<path d="M1000.4,1920.3 H1203.2 V1951.7 H1000.4 a8,8 0 0 1 -8,-8 v-15.4 a8,8 0 0 1 8,-8 z" fill="#2a69bd"/>
<rect x="1315.6" y="1920.3" width="279.8" height="31.4" rx="8" fill="#e7f5f4"/>
<path d="M1323.6,1920.3 H1512.8 V1951.7 H1323.6 a8,8 0 0 1 -8,-8 v-15.4 a8,8 0 0 1 8,-8 z" fill="#0eaa94"/>
<text x="668.0" y="2043.0" font-size="35.0" fill="#2b2f36" textLength="265.1" lengthAdjust="spacingAndGlyphs" text-anchor="start">model_type.val...</text>
<rect x="992.4" y="2006.0" width="278.8" height="31.4" rx="8" fill="#e9eff8"/>
<path d="M1000.4,2006 H1028 V2037.4 H1000.4 a8,8 0 0 1 -8,-8 v-15.4 a8,8 0 0 1 8,-8 z" fill="#2a69bd"/>
<rect x="1315.6" y="2006.0" width="279.8" height="31.4" rx="8" fill="#e7f5f4"/>
<path d="M1323.6,2006 H1511.8 V2037.4 H1323.6 a8,8 0 0 1 -8,-8 v-15.4 a8,8 0 0 1 8,-8 z" fill="#0eaa94"/>
<text x="668.0" y="2128.0" font-size="35.0" fill="#2b2f36" textLength="265.1" lengthAdjust="spacingAndGlyphs" text-anchor="start">model_type.val...</text>
<rect x="992.4" y="2092.3" width="278.8" height="31.4" rx="8" fill="#e9eff8"/>
<path d="M1000.4,2092.3 H1022 V2123.7000000000003 H1000.4 a8,8 0 0 1 -8,-8 v-15.4 a8,8 0 0 1 8,-8 z" fill="#2a69bd"/>
<rect x="1315.6" y="2092.3" width="279.8" height="31.4" rx="8" fill="#f5eff0"/>
<path d="M1323.6,2092.3 H1512 V2123.7000000000003 H1323.6 a8,8 0 0 1 -8,-8 v-15.4 a8,8 0 0 1 8,-8 z" fill="#d95b72"/>
<rect x="635.0" y="1988.5" width="972.0" height="1.8" rx="0" fill="#ececec"/>
<rect x="635.0" y="2074.8" width="972.0" height="1.8" rx="0" fill="#ececec"/>
</g>
<rect x="1606.0" y="1905.0" width="2.0" height="225.0" rx="0" fill="#ececec"/>
<rect x="1614.8" y="1911.0" width="16.7" height="53.7" rx="8" fill="#b9b9b9"/>
<rect x="635.0" y="2129.0" width="1001.7" height="50.0" rx="0" fill="#fefefe"/>
<rect x="1689.2" y="1520.7" width="1035.0" height="659.1" rx="5" fill="#fefefe" stroke="#cacaca" stroke-width="1.8"/>
<text x="2022.8" y="1610.0" font-size="29.0" font-weight="700" fill="#2c2f34" textLength="369.7" lengthAdjust="spacingAndGlyphs" text-anchor="start">Process CPU Threads In Use</text>
<text x="1797.1" y="1682.0" font-size="23.0" fill="#5b5f66" textLength="189.3" lengthAdjust="spacingAndGlyphs" text-anchor="start">colorful-yogurt-9</text>
<rect x="1797.8" y="1690.2" width="820.6" height="11.4" rx="0" fill="#eaae2f"/>
<text x="1797.1" y="1739.3" font-size="23.0" fill="#5b5f66" textLength="206.6" lengthAdjust="spacingAndGlyphs" text-anchor="start">glowing-shadow-8</text>
<rect x="1797.8" y="1747.5" width="820.6" height="11.4" rx="0" fill="#be5bc2"/>
<text x="1797.1" y="1796.6" font-size="23.0" fill="#5b5f66" textLength="163.6" lengthAdjust="spacingAndGlyphs" text-anchor="start">wild-cosmos-7</text>
<rect x="1797.8" y="1804.8" width="525.2" height="11.4" rx="0" fill="#7dc6b8"/>
<text x="1797.1" y="1853.8" font-size="23.0" fill="#5b5f66" textLength="155.1" lengthAdjust="spacingAndGlyphs" text-anchor="start">fallen-dawn-6</text>
<rect x="1797.8" y="1862.0" width="492.4" height="11.4" rx="0" fill="#df6330"/>
<text x="1797.1" y="1911.1" font-size="23.0" fill="#5b5f66" textLength="143.4" lengthAdjust="spacingAndGlyphs" text-anchor="start">trim-moon-4</text>
<rect x="1797.8" y="1919.3" width="820.6" height="11.4" rx="0" fill="#6f4aab"/>
<text x="1797.1" y="1968.4" font-size="23.0" fill="#5b5f66" textLength="180.9" lengthAdjust="spacingAndGlyphs" text-anchor="start">golden-sunset-3</text>
<rect x="1797.8" y="1976.6" width="820.6" height="11.4" rx="0" fill="#3d8e55"/>
<text x="1797.1" y="2025.7" font-size="23.0" fill="#5b5f66" textLength="121.1" lengthAdjust="spacingAndGlyphs" text-anchor="start">trim-rain-2</text>
<rect x="1797.8" y="2033.9" width="525.2" height="11.4" rx="0" fill="#d64343"/>
<line x1="1797.8" y1="2098.0" x2="2619.5" y2="2098.0" stroke="#8f8f8f" stroke-width="1.5"/>
<line x1="1797.8" y1="2098.0" x2="1797.8" y2="2115.0" stroke="#8f8f8f" stroke-width="1.5"/>
<text x="1789.8" y="2144.0" font-size="23.0" fill="#5b5f66" text-anchor="middle">0</text>
<line x1="1863.5" y1="2098.0" x2="1863.5" y2="2115.0" stroke="#8f8f8f" stroke-width="1.5"/>
<text x="1855.5" y="2144.0" font-size="23.0" fill="#5b5f66" text-anchor="middle">2</text>
<line x1="1929.1" y1="2098.0" x2="1929.1" y2="2115.0" stroke="#8f8f8f" stroke-width="1.5"/>
<text x="1921.1" y="2144.0" font-size="23.0" fill="#5b5f66" text-anchor="middle">4</text>
<line x1="1994.8" y1="2098.0" x2="1994.8" y2="2115.0" stroke="#8f8f8f" stroke-width="1.5"/>
<text x="1986.8" y="2144.0" font-size="23.0" fill="#5b5f66" text-anchor="middle">6</text>
<line x1="2060.4" y1="2098.0" x2="2060.4" y2="2115.0" stroke="#8f8f8f" stroke-width="1.5"/>
<text x="2052.4" y="2144.0" font-size="23.0" fill="#5b5f66" text-anchor="middle">8</text>
<line x1="2126.1" y1="2098.0" x2="2126.1" y2="2115.0" stroke="#8f8f8f" stroke-width="1.5"/>
<text x="2118.1" y="2144.0" font-size="23.0" fill="#5b5f66" text-anchor="middle">10</text>
<line x1="2191.7" y1="2098.0" x2="2191.7" y2="2115.0" stroke="#8f8f8f" stroke-width="1.5"/>
<text x="2183.7" y="2144.0" font-size="23.0" fill="#5b5f66" text-anchor="middle">12</text>
<line x1="2257.3" y1="2098.0" x2="2257.3" y2="2115.0" stroke="#8f8f8f" stroke-width="1.5"/>
<text x="2249.3" y="2144.0" font-size="23.0" fill="#5b5f66" text-anchor="middle">14</text>
<line x1="2323.0" y1="2098.0" x2="2323.0" y2="2115.0" stroke="#8f8f8f" stroke-width="1.5"/>
<text x="2315.0" y="2144.0" font-size="23.0" fill="#5b5f66" text-anchor="middle">16</text>
<line x1="2388.7" y1="2098.0" x2="2388.7" y2="2115.0" stroke="#8f8f8f" stroke-width="1.5"/>
<text x="2380.7" y="2144.0" font-size="23.0" fill="#5b5f66" text-anchor="middle">18</text>
<line x1="2454.3" y1="2098.0" x2="2454.3" y2="2115.0" stroke="#8f8f8f" stroke-width="1.5"/>
<text x="2446.3" y="2144.0" font-size="23.0" fill="#5b5f66" text-anchor="middle">20</text>
<line x1="2519.9" y1="2098.0" x2="2519.9" y2="2115.0" stroke="#8f8f8f" stroke-width="1.5"/>
<text x="2511.9" y="2144.0" font-size="23.0" fill="#5b5f66" text-anchor="middle">22</text>
<line x1="2585.6" y1="2098.0" x2="2585.6" y2="2115.0" stroke="#8f8f8f" stroke-width="1.5"/>
<text x="2577.6" y="2144.0" font-size="23.0" fill="#5b5f66" text-anchor="middle">24</text>
</svg></body></html>
